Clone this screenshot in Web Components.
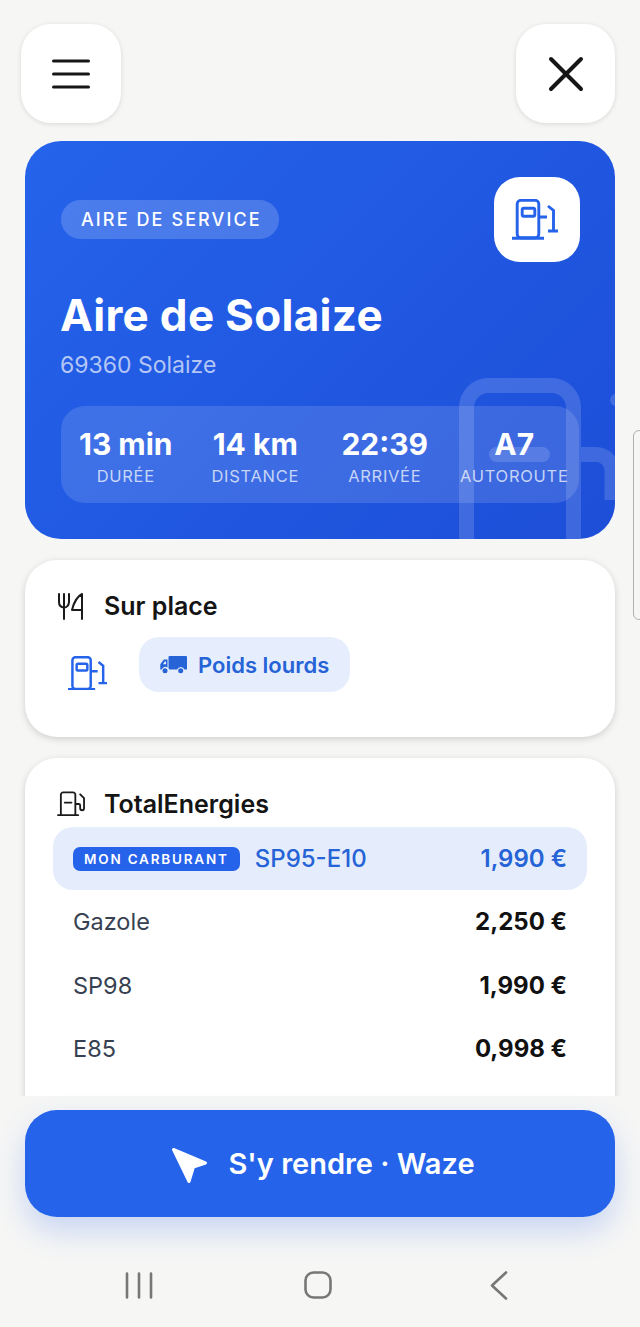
<!DOCTYPE html>
<html lang="fr">
<head>
<meta charset="utf-8">
<title>Aire de Solaize</title>
<style>
  html, body { margin: 0; height: 100%; background: #f6f6f5; }
  body { font-family: Inter, "Liberation Sans", sans-serif; overflow: hidden; }
</style>
</head>
<body>
<app-shell>
  <top-bar slot="top"></top-bar>

  <hero-card title="Aire de Solaize" subtitle="69360 Solaize" badge="AIRE DE SERVICE">
    <stat-item value="13 min" label="DURÉE"></stat-item>
    <stat-item value="14 km" label="DISTANCE"></stat-item>
    <stat-item value="22:39" label="ARRIVÉE"></stat-item>
    <stat-item value="A7" label="AUTOROUTE"></stat-item>
  </hero-card>

  <info-card heading="Sur place" icon="fork">
    <service-list>
      <pump-icon size="39" style="margin-top:17px"></pump-icon>
      <service-pill label="Poids lourds"></service-pill>
    </service-list>
  </info-card>

  <info-card heading="TotalEnergies" icon="fuel">
    <fuel-row name="SP95-E10" price="1,990 €" mine></fuel-row>
    <fuel-row name="Gazole" price="2,250 €"></fuel-row>
    <fuel-row name="SP98" price="1,990 €"></fuel-row>
    <fuel-row name="E85" price="0,998 €"></fuel-row>
  </info-card>

  <cta-button slot="bottom" label="S'y rendre · Waze"></cta-button>
  <nav-bar slot="bottom"></nav-bar>
</app-shell>
<edge-handle></edge-handle>

<script>
const ICONS = {
  pump: `<rect x="5.2" y="1.4" width="21.6" height="37.4" rx="3.5"/><rect x="10.2" y="9.2" width="12.6" height="8" rx="1.5"/><path d="M0 39.2h32M27 18h8M36 7l5.500 4.500V32M36 32h10"/>`,
  fork: `<path d="M2 1v8c0 3 1.500 5 4.500 5.500S12 12 12 9V1M7 1v25M25 26V1c-4 2-8 8-10 16h10"/>`,
  fuel: `<path d="M1 24.500h21M4 24V3.500A2.500 2.500 0 0 1 6.500 1h10A2.500 2.500 0 0 1 19 3.500V24M8 11.500h7M19 13h3.500a1.500 1.500 0 0 1 1.500 1.500v3a2 2 0 0 0 4 0V7l-4-4"/>`
};

class AppShell extends HTMLElement {
  connectedCallback() {
    this.attachShadow({ mode: "open" });
    this.shadowRoot.innerHTML = `
<style>
  :host { display: flex; flex-direction: column; height: 100vh; background: #f6f6f5; }
  .top { flex: none; }
  main { flex: 1; min-height: 0; overflow: hidden; display: flex; flex-direction: column; gap: 21px; padding: 18px 25px 0; }
  .bottom { flex: none; }
</style>
<div class="top"><slot name="top"></slot></div>
<main><slot></slot></main>
<div class="bottom"><slot name="bottom"></slot></div>`;
  }
}

class TopBar extends HTMLElement {
  connectedCallback() {
    this.attachShadow({ mode: "open" });
    this.shadowRoot.innerHTML = `
<style>
  :host { display: flex; justify-content: space-between; padding: 24px 25px 0 21px; }
  button {
    width: 100px; height: 99px; border: 0; border-radius: 30px; background: #fff; padding: 0;
    box-shadow: 0 1px 5px rgba(0,0,0,.12);
    display: flex; align-items: center; justify-content: center;
  }
  svg { display: block; fill: none; stroke: #161616; stroke-linecap: round; }
</style>
<button aria-label="Menu">
  <svg width="38" height="30" viewBox="0 0 38 30" stroke-width="3"><path d="M1.500 2h35M1.500 15h35M1.500 28h35"/></svg>
</button>
<button aria-label="Fermer" style="width:99px">
  <svg width="36" height="36" viewBox="0 0 36 36" stroke-width="4"><path d="M3 3l30 30M33 3L3 33"/></svg>
</button>`;
  }
}

class PumpIcon extends HTMLElement {
  connectedCallback() {
    this.attachShadow({ mode: "open" });
    const size = Number(this.getAttribute("size")) || 46;
    this.shadowRoot.innerHTML = `
<style>
  :host { display: block; line-height: 0; }
  svg { fill: none; stroke: #2563eb; stroke-width: 2.900; }
</style>
<svg width="${size}" height="${size * 41 / 46}" viewBox="0 0 46 41">${ICONS.pump}</svg>`;
  }
}

class HeroCard extends HTMLElement {
  connectedCallback() {
    this.attachShadow({ mode: "open" });
    this.shadowRoot.innerHTML = `
<style>
  :host {
    display: block; position: relative; flex: none; height: 398px; box-sizing: border-box;
    padding: 36px; border-radius: 36px; overflow: hidden; color: #fff;
    background: linear-gradient(135deg, #2563eb, #1d4ed8);
    font-family: Inter, "Liberation Sans", sans-serif;
  }
  .mark { position: absolute; left: 430px; top: 229px; fill: none; stroke: rgba(255,255,255,.15); stroke-width: 15; }
  .top { position: relative; display: flex; justify-content: space-between; align-items: flex-start; height: 85px; }
  .badge {
    margin-top: 23px; height: 39px; box-sizing: border-box; padding: 0 17px 0 20px; border-radius: 20px;
    background: rgba(255,255,255,.18); font-size: 18px; font-weight: 500; letter-spacing: 2.100px;
    display: flex; align-items: center;
  }
  .box {
    width: 86px; height: 85px; margin-right: -1px; padding-right: 4px; box-sizing: border-box;
    border-radius: 26px; background: #fff; display: flex; align-items: center; justify-content: center;
  }
  h1 { position: relative; margin: 27px 0 0 -1px; font-size: 44px; line-height: 52px; font-weight: 700; letter-spacing: .3px; }
  p { position: relative; margin: 9px 0 0 -1px; font-size: 23px; line-height: 30px; color: rgba(255,255,255,.66); }
  .stats {
    position: relative; margin-top: 26px; height: 97px; box-sizing: border-box; padding-top: 3px;
    border-radius: 24px; background: rgba(255,255,255,.13);
    display: grid; grid-template-columns: repeat(4, 1fr); align-items: center;
  }
</style>
<svg class="mark" width="160" height="170" viewBox="455 370 160 170">
  <rect x="466.500" y="385.500" width="107" height="200" rx="22"/>
  <path d="M581 454.500h15a16 16 0 0 1 16 16V500"/>
  <path d="M496.500 454.500h46" stroke-linecap="round"/>
  <circle cx="616" cy="400" r="6" fill="rgba(255,255,255,.15)" stroke="none"/>
</svg>
<div class="top">
  <span class="badge">${this.getAttribute("badge")}</span>
  <span class="box"><pump-icon></pump-icon></span>
</div>
<h1>${this.getAttribute("title")}</h1>
<p>${this.getAttribute("subtitle")}</p>
<div class="stats"><slot></slot></div>`;
  }
}

class StatItem extends HTMLElement {
  connectedCallback() {
    this.attachShadow({ mode: "open" });
    this.shadowRoot.innerHTML = `
<style>
  :host { display: block; text-align: center; white-space: nowrap; }
  .v { font-size: 30px; line-height: 34px; font-weight: 700; color: #fff; }
  .l { margin-top: 5px; font-size: 16.500px; line-height: 20px; letter-spacing: .7px; color: rgba(255,255,255,.72); }
</style>
<div class="v">${this.getAttribute("value")}</div>
<div class="l">${this.getAttribute("label")}</div>`;
  }
}

class InfoCard extends HTMLElement {
  connectedCallback() {
    this.attachShadow({ mode: "open" });
    const icon = this.getAttribute("icon");
    const head = icon === "fork"
      ? `<svg width="28" height="27" viewBox="0 0 28 27" stroke-width="2">${ICONS.fork}</svg>`
      : `<svg width="28" height="26" viewBox="0 0 29 26" stroke-width="1.900">${ICONS.fuel}</svg>`;
    this.shadowRoot.innerHTML = `
<style>
  :host {
    display: block; flex: none; box-sizing: border-box; padding: 31px 28px 0;
    border-radius: 32px; background: #fff; box-shadow: 0 2px 7px rgba(0,0,0,.16);
  }
  .head { display: flex; align-items: center; gap: 19px; height: 30px; margin-left: 4px; }
  .head span { font-size: 25px; font-weight: 600; color: #141414; }
  svg { flex: none; fill: none; stroke: #1a1a1a; stroke-linecap: round; stroke-linejoin: round; }
  .body { margin-top: ${icon === "fork" ? 16 : 8}px; padding-bottom: ${icon === "fork" ? 45 : 60}px; }
</style>
<div class="head">${head}<span>${this.getAttribute("heading")}</span></div>
<div class="body"><slot></slot></div>`;
  }
}

class ServiceList extends HTMLElement {
  connectedCallback() {
    this.attachShadow({ mode: "open" });
    this.shadowRoot.innerHTML = `
<style>
  :host { display: flex; align-items: center; gap: 32px; margin-left: 15px; }
</style>
<slot></slot>`;
  }
}

class ServicePill extends HTMLElement {
  connectedCallback() {
    this.attachShadow({ mode: "open" });
    this.shadowRoot.innerHTML = `
<style>
  :host {
    display: flex; align-items: center; gap: 11px; height: 55px; padding: 0 21px; border-radius: 20px;
    background: #e6eefd; color: #2563d6; font-size: 22px; font-weight: 600;
  }
  svg { display: block; fill: #2563d6; }
</style>
<svg width="27" height="18" viewBox="0 0 27 18">
  <path d="M8.500 1a1 1 0 0 1 1-1H26a1 1 0 0 1 1 1v12.500h-2.600a3.800 3.800 0 0 0-7.200 0H9.300a3.800 3.800 0 0 0-.8-1.300z"/>
  <path fill-rule="evenodd" d="M7.500 3.500H3.800L.3 8.200v5.300h1.500a3.800 3.800 0 0 1 5.700-2zM3 8.200l1.800-2.800h1.200v2.800z"/>
  <circle cx="5" cy="14.800" r="2.500"/><circle cx="20.700" cy="14.800" r="2.500"/>
</svg>
<span>${this.getAttribute("label")}</span>`;
  }
}

class FuelRow extends HTMLElement {
  connectedCallback() {
    this.attachShadow({ mode: "open" });
    const mine = this.hasAttribute("mine");
    this.shadowRoot.innerHTML = `
<style>
  :host {
    display: flex; align-items: center; height: 63.300px; padding: 0 20px; border-radius: 20px;
    color: #374151; font-size: 23.500px;
  }
  :host([mine]) { background: #e5edfc; color: #2563d6; font-size: 24px; font-weight: 500; }
  .badge {
    height: 24px; box-sizing: border-box; padding: 0 11px; margin-right: 15px; border-radius: 7px;
    background: #2563eb; color: #fff; font-size: 13.500px; font-weight: 600; letter-spacing: 1.800px;
    display: flex; align-items: center; white-space: nowrap;
  }
  .price { margin-left: auto; font-size: 24px; font-weight: 700; color: #111; }
  :host([mine]) .price { color: #2563d6; font-weight: 600; }
</style>
${mine ? `<span class="badge">MON CARBURANT</span>` : ""}
<span>${this.getAttribute("name")}</span>
<span class="price">${this.getAttribute("price")}</span>`;
  }
}

class CtaButton extends HTMLElement {
  connectedCallback() {
    this.attachShadow({ mode: "open" });
    this.shadowRoot.innerHTML = `
<style>
  :host { display: block; padding: 14px 25px 0; }
  button {
    width: 100%; height: 107px; border: 0; border-radius: 32px; background: #2563eb; color: #fff;
    padding: 0 0 0 6px;
    font: 600 29px Inter, "Liberation Sans", sans-serif;
    box-shadow: 0 14px 30px rgba(37,99,235,.22);
    display: flex; align-items: center; justify-content: center; gap: 20px;
  }
  svg { display: block; margin-top: 3px; fill: #fff; stroke: #fff; stroke-width: 3; stroke-linejoin: round; }
</style>
<button>
  <svg width="37" height="37" viewBox="0 0 37 37"><path d="M2.500 2.500l32 13.500-12 4-4.500 14.500z"/></svg>
  <span>${this.getAttribute("label")}</span>
</button>`;
  }
}

class NavBar extends HTMLElement {
  connectedCallback() {
    this.attachShadow({ mode: "open" });
    this.shadowRoot.innerHTML = `
<style>
  :host { display: grid; grid-template-columns: 278px 80px 1fr; height: 110px; align-items: center; padding-top: 26px; box-sizing: border-box; }
  svg { display: block; justify-self: center; fill: none; stroke: #777; stroke-width: 2.600; stroke-linecap: round; stroke-linejoin: round; }
</style>
<svg width="28" height="27" viewBox="0 0 28 27"><path d="M2 1.500v24M14 1.500v24M26 1.500v24"/></svg>
<svg width="28" height="28" viewBox="0 0 28 28"><rect x="1.500" y="1.500" width="25" height="25" rx="8"/></svg>
<svg width="18" height="29" viewBox="0 0 18 29"><path d="M16 1.500L2 14.500l14 13"/></svg>`;
  }
}

class EdgeHandle extends HTMLElement {
  connectedCallback() {
    this.attachShadow({ mode: "open" });
    this.shadowRoot.innerHTML = `
<style>
  :host {
    position: fixed; left: 633px; top: 430px; width: 12px; height: 190px; box-sizing: border-box;
    border: 1px solid #b0b0b0; border-radius: 6px; background: #f6f6f5;
  }
</style>`;
  }
}

customElements.define("app-shell", AppShell);
customElements.define("top-bar", TopBar);
customElements.define("pump-icon", PumpIcon);
customElements.define("hero-card", HeroCard);
customElements.define("stat-item", StatItem);
customElements.define("info-card", InfoCard);
customElements.define("service-list", ServiceList);
customElements.define("service-pill", ServicePill);
customElements.define("fuel-row", FuelRow);
customElements.define("cta-button", CtaButton);
customElements.define("nav-bar", NavBar);
customElements.define("edge-handle", EdgeHandle);
</script>
</body>
</html>
